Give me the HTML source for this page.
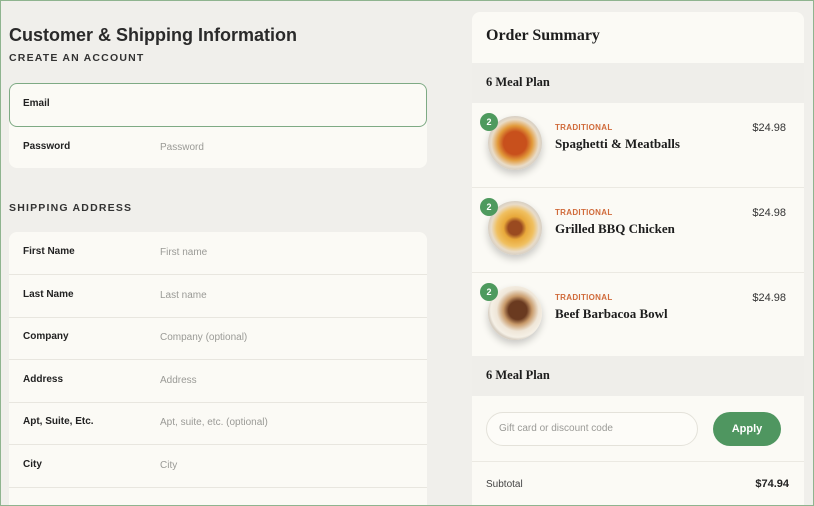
<!DOCTYPE html>
<html style="width:814px;height:506px;overflow:hidden"><head><style>
*{box-sizing:border-box;margin:0;padding:0}
body{width:814px;height:506px;overflow:hidden;background:#f0efeb;font-family:"Liberation Sans",sans-serif;position:relative;color:#222}
.frame{position:absolute;left:0;top:0;width:814px;height:506px;border:1px solid #8fb48f;pointer-events:none;z-index:9}
.abs{position:absolute}
h1{position:absolute;left:9px;top:25px;font-size:18px;font-weight:bold;color:#2a2a2a}
.lbl{position:absolute;left:9px;font-size:10.5px;letter-spacing:1.2px;color:#333;font-weight:bold}
.card{position:absolute;background:#fbfaf5;border-radius:8px}
.row{position:absolute;left:0;right:0;height:43px;border-bottom:1px solid #e8e6df}
.row b{position:absolute;left:14px;top:14px;font-size:10px;color:#222}
.row span{position:absolute;left:151px;top:15px;font-size:10px;color:#9a9a96}
.serif{font-family:"Liberation Serif",serif;font-weight:bold;color:#1d1d1d}
.band{position:absolute;left:0;right:0;background:#efeeea}
.item{position:absolute;left:0;right:0;height:85px;border-bottom:1px solid #ebe9e2}
.plate{position:absolute;left:16px;top:13px;width:54px;height:54px;border-radius:50%;background:radial-gradient(circle,#c8501c 0 30%,#e29a3a 45%,#e9dcc8 62%,#d8d0c4 70%);box-shadow:0 4px 8px rgba(0,0,0,.2)}
.badge{position:absolute;left:8px;top:10px;width:18px;height:18px;border-radius:50%;background:#4e9a5e;color:#fff;font-size:9px;font-weight:bold;text-align:center;line-height:18px}
.tag{position:absolute;left:83px;top:20px;font-size:8px;color:#d06a3a;letter-spacing:.3px;font-weight:bold}
.name{position:absolute;left:83px;top:33px;font-size:13px}
.price{position:absolute;right:18px;top:19px;font-size:11px;color:#333}
</style></head><body>
<div class="frame"></div>
<h1>Customer &amp; Shipping Information</h1>
<div class="lbl" style="top:52px">CREATE AN ACCOUNT</div>
<div class="card" style="left:9px;top:83px;width:418px;height:85px"></div>
<div class="abs" style="left:9px;top:83px;width:418px;height:44px;border:1px solid #7eaa84;border-radius:8px;background:#fbfaf5"></div>
<div class="abs" style="left:23px;top:98px;font-size:10px;font-weight:bold">Email</div>
<div class="abs" style="left:23px;top:141px;font-size:10px;font-weight:bold">Password</div>
<div class="abs" style="left:160px;top:142px;font-size:10px;color:#9a9a96">Password</div>
<div class="lbl" style="top:202px">SHIPPING ADDRESS</div>
<div class="card" style="left:9px;top:232px;width:418px;height:274px;border-radius:8px 8px 0 0;overflow:hidden">
<div class="row" style="top:0"><b>First Name</b><span>First name</span></div>
<div class="row" style="top:43px"><b>Last Name</b><span>Last name</span></div>
<div class="row" style="top:85px"><b>Company</b><span>Company (optional)</span></div>
<div class="row" style="top:128px"><b>Address</b><span>Address</span></div>
<div class="row" style="top:170px"><b>Apt, Suite, Etc.</b><span>Apt, suite, etc. (optional)</span></div>
<div class="row" style="top:213px"><b>City</b><span>City</span></div>
</div>
<div class="card" style="left:472px;top:12px;width:332px;height:494px;border-radius:8px 8px 0 0;overflow:hidden">
<div class="abs serif" style="left:14px;top:15px;font-size:16px">Order Summary</div>
<div class="band" style="top:51px;height:40px"><div class="abs serif" style="left:14px;top:12px;font-size:12.5px">6 Meal Plan</div></div>
<div class="item" style="top:91px"><div class="plate"></div><div class="badge">2</div><div class="tag">TRADITIONAL</div><div class="name serif">Spaghetti &amp; Meatballs</div><div class="price">$24.98</div></div>
<div class="item" style="top:176px"><div class="plate" style="background:radial-gradient(circle,#9a4a20 0 18%,#e8a83a 30%,#f0c060 48%,#e9dcc8 62%,#d8d0c4 70%)"></div><div class="badge">2</div><div class="tag">TRADITIONAL</div><div class="name serif">Grilled BBQ Chicken</div><div class="price">$24.98</div></div>
<div class="item" style="top:261px"><div class="plate" style="background:radial-gradient(circle at 55% 45%,#6a3a20 0 22%,#c89a6a 34%,#efe6d8 50%,#f5f0e6 64%,#d8d0c4 70%)"></div><div class="badge">2</div><div class="tag">TRADITIONAL</div><div class="name serif">Beef Barbacoa Bowl</div><div class="price">$24.98</div></div>
<div class="band" style="top:344px;height:40px"><div class="abs serif" style="left:14px;top:12px;font-size:12.5px">6 Meal Plan</div></div>
<div class="abs" style="left:14px;top:400px;width:212px;height:34px;border:1px solid #e4e2da;border-radius:17px;background:#fdfcf8"><span class="abs" style="left:12px;top:10px;font-size:10px;color:#9a9a96">Gift card or discount code</span></div>
<div class="abs" style="left:241px;top:400px;width:68px;height:34px;border-radius:17px;background:#4f9660;color:#fff;font-size:11px;font-weight:bold;text-align:center;line-height:34px">Apply</div>
<div class="abs" style="left:0;right:0;top:449px;border-top:1px solid #ebe9e2"></div>
<div class="abs" style="left:14px;top:467px;font-size:10px;color:#444">Subtotal</div>
<div class="abs" style="right:15px;top:466px;font-size:11px;font-weight:bold;color:#222">$74.94</div>
</div>
</body></html>
